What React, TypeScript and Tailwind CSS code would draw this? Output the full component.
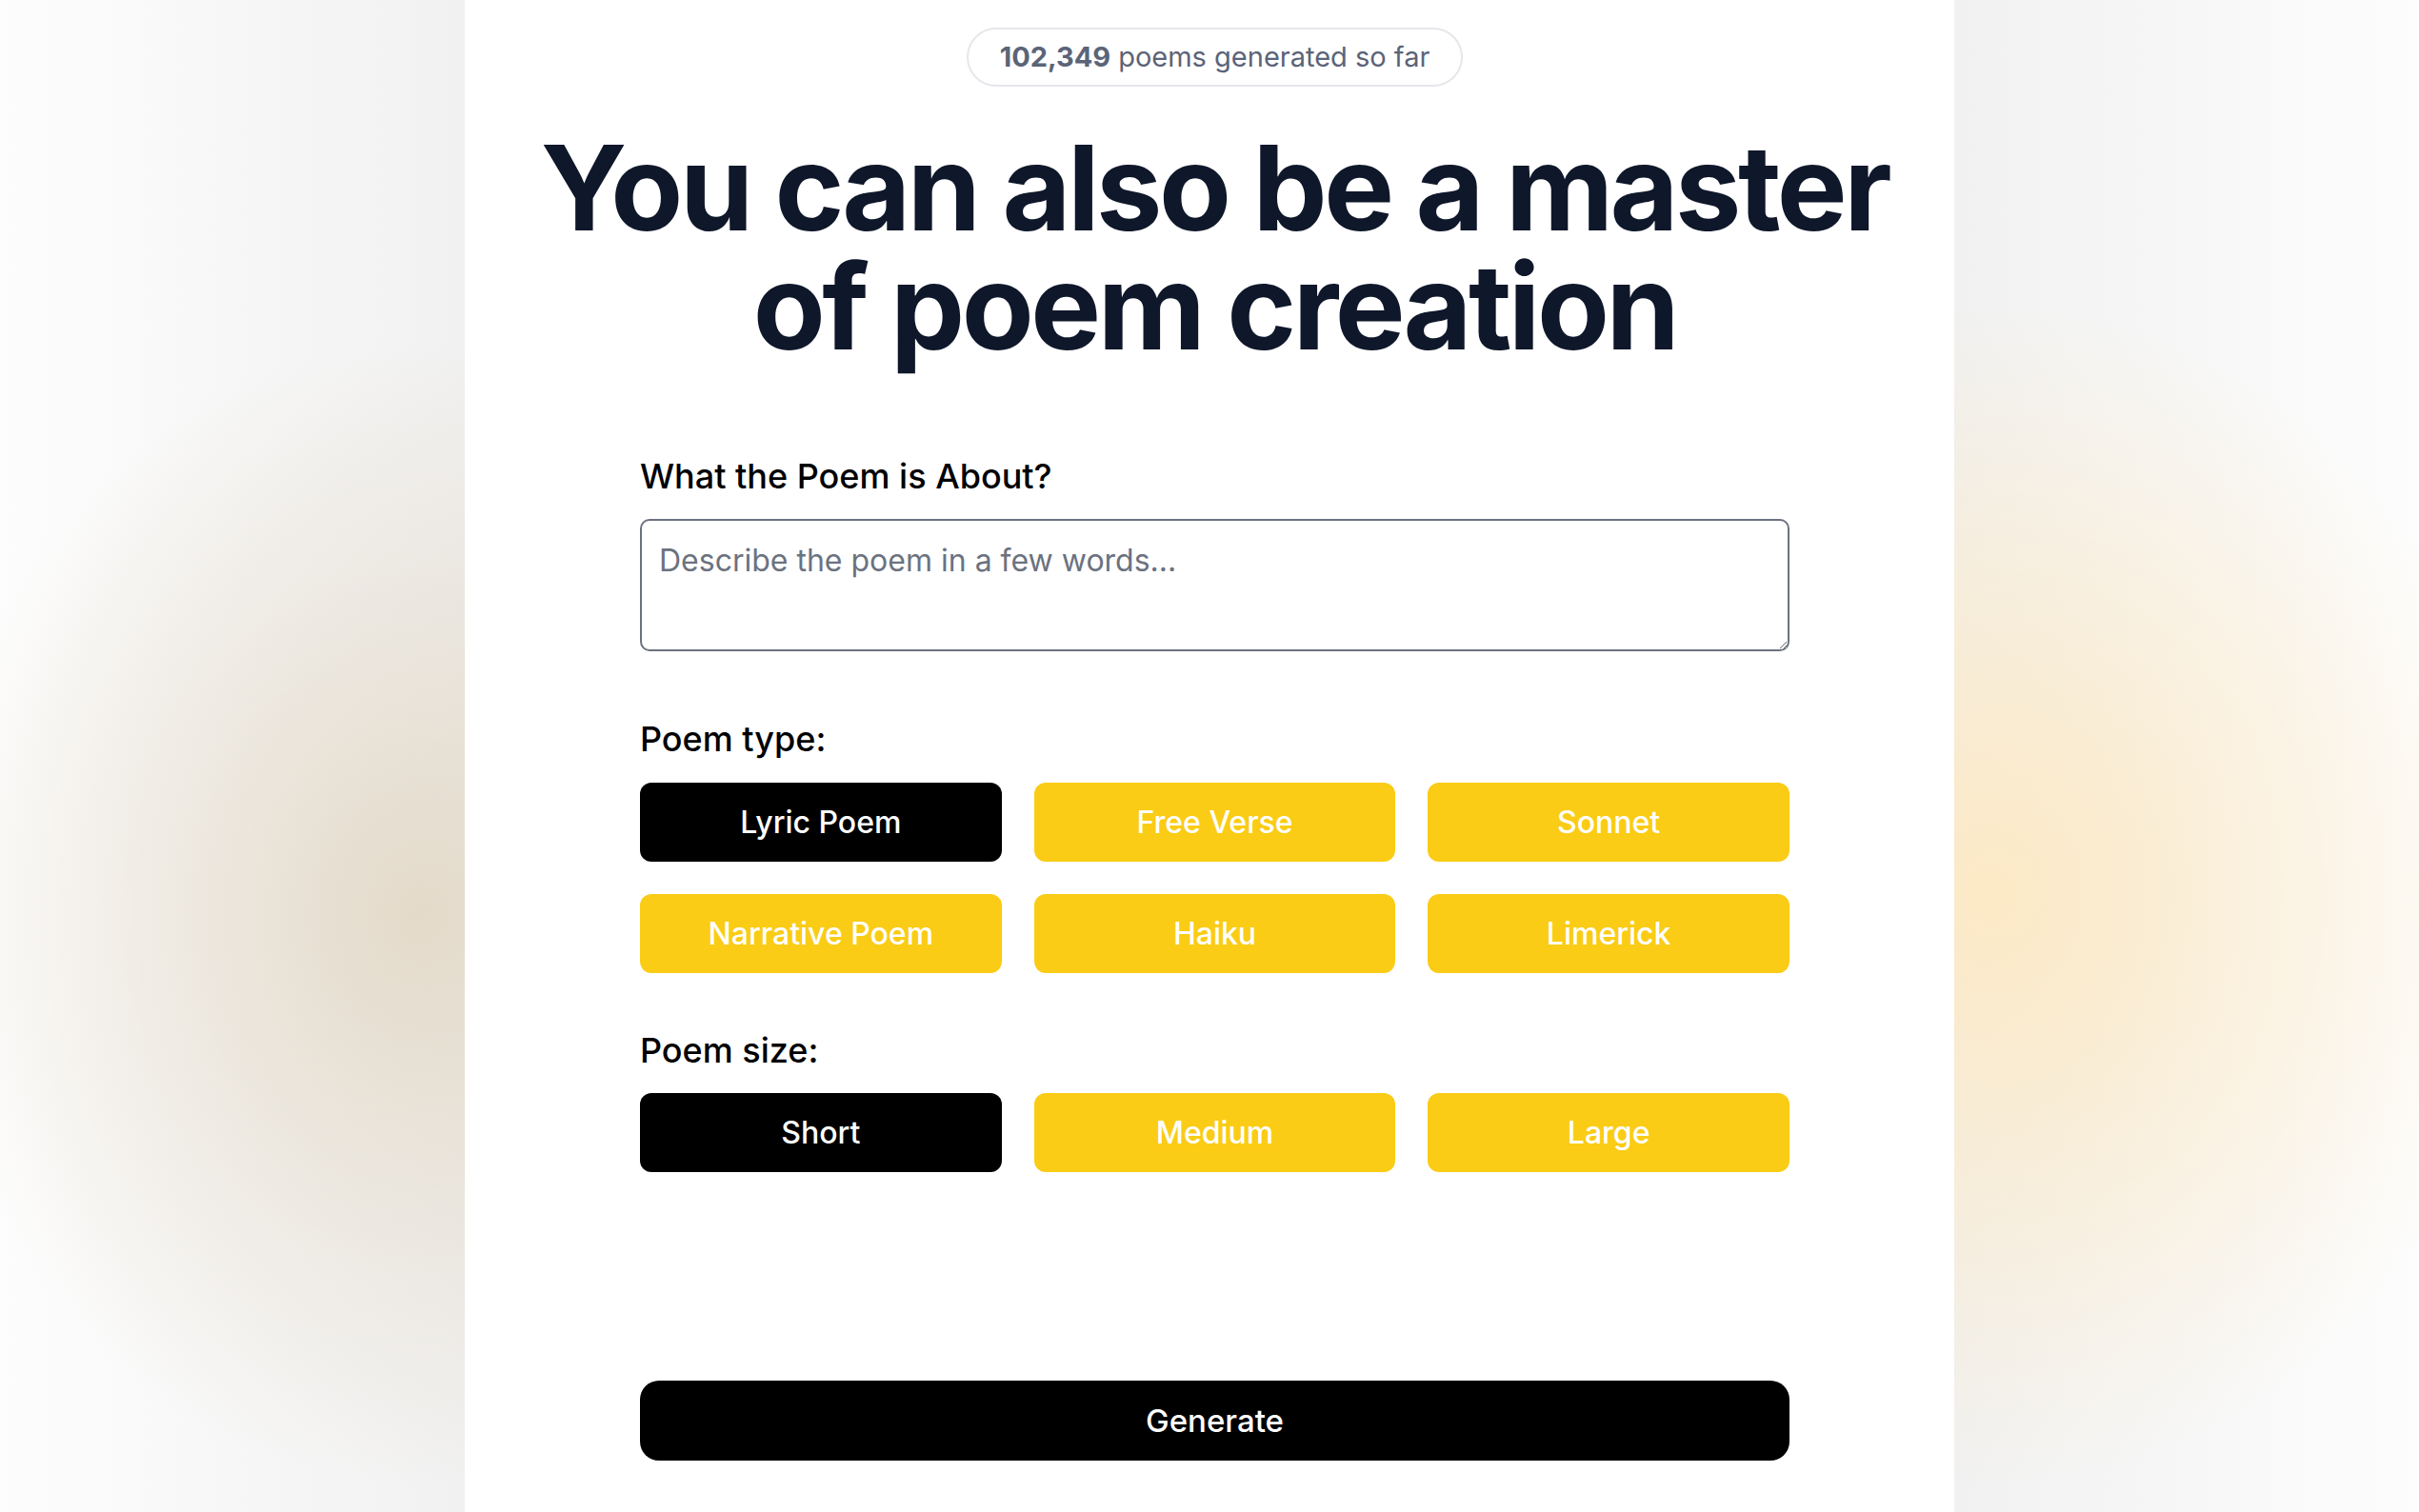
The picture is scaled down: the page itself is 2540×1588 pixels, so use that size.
import { useState } from 'react';

const poemTypes = ['Lyric Poem', 'Free Verse', 'Sonnet', 'Narrative Poem', 'Haiku', 'Limerick'];
const poemSizes = ['Short', 'Medium', 'Large'];

function Choice({ label, active, onClick }: { label: string; active: boolean; onClick: () => void }) {
    return (
        <button
            type="button"
            onClick={onClick}
            className={
                active
                    ? 'h-[83px] rounded-[12px] bg-black text-white text-[32px] font-medium leading-none'
                    : 'h-[83px] rounded-[12px] bg-[#facc15] text-white text-[32px] font-medium leading-none'
            }
        >
            {label}
        </button>
    );
}

export default function App() {
    const [type, setType] = useState('Lyric Poem');
    const [size, setSize] = useState('Short');

    return (
        <div className="min-h-screen w-full flex justify-center font-['Inter','Noto_Sans',sans-serif] bg-[radial-gradient(520px_600px_at_440px_960px,rgba(224,212,192,0.8),transparent),radial-gradient(560px_620px_at_2090px_940px,rgba(253,232,192,0.9),transparent),linear-gradient(to_right,#fdfdfd,#f1f1f1_19%,#f1f1f1_81%,#fdfdfd)]">
            <main className="w-[1564px] min-h-screen bg-white pl-[11px] flex flex-col items-center">
                {/* Counter badge */}
                <div className="mt-[29px] h-[62px] px-[33px] rounded-full border-2 border-[#e5e7eb] flex items-center text-[29px] text-[#5b6478]">
                    <span className="font-bold">102,349</span>
                    <span className="ml-[8px]">poems generated so far</span>
                </div>

                {/* Heading */}
                <h1 className="mt-[44px] text-center text-[124px] leading-[125px] font-bold tracking-[-0.028em] text-[#0f172a]">
                    You can also be a master
                    <br />
                    of poem creation
                </h1>

                {/* Form */}
                <div className="w-[1207px] self-start ml-[173px] flex flex-col">
                    <label className="mt-[91px] text-[36px] leading-[48px] font-medium text-black">
                        What the Poem is About?
                    </label>
                    <textarea
                        rows={2}
                        placeholder="Describe the poem in a few words..."
                        className="mt-[21px] h-[139px] w-full rounded-[10px] border-2 border-[#6b7280] pl-[18px] pt-[20px] text-[32px] leading-[44px] text-black placeholder:text-[#6b7280] outline-none"
                    />

                    <p className="mt-[68px] text-[36px] leading-[48px] font-medium text-black">Poem type:</p>
                    <div className="mt-[22px] grid grid-cols-3 gap-[34px]">
                        {poemTypes.map((t) => (
                            <Choice key={t} label={t} active={t === type} onClick={() => setType(t)} />
                        ))}
                    </div>

                    <p className="mt-[57px] text-[36px] leading-[48px] font-medium text-black">Poem size:</p>
                    <div className="mt-[21px] grid grid-cols-3 gap-[34px]">
                        {poemSizes.map((s) => (
                            <Choice key={s} label={s} active={s === size} onClick={() => setSize(s)} />
                        ))}
                    </div>

                    <button
                        type="button"
                        className="mt-[219px] h-[84px] w-full rounded-[20px] bg-black text-white text-[33px] font-medium leading-none"
                    >
                        Generate
                    </button>
                </div>
            </main>
        </div>
    );
}
